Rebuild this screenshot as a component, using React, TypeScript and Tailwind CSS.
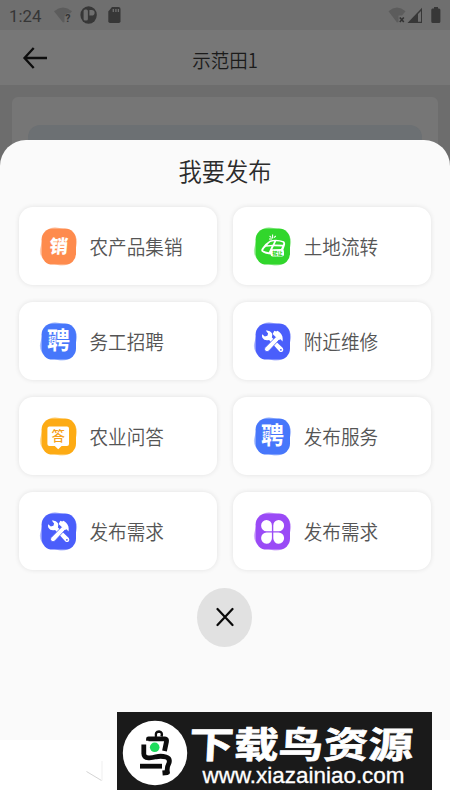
import { ReactNode } from "react";

type IconName = "sell" | "land" | "hire" | "repair" | "answer" | "more";

const actions: { label: string; icon: IconName }[] = [
  { label: "农产品集销", icon: "sell" },
  { label: "土地流转", icon: "land" },
  { label: "务工招聘", icon: "hire" },
  { label: "附近维修", icon: "repair" },
  { label: "农业问答", icon: "answer" },
  { label: "发布服务", icon: "hire" },
  { label: "发布需求", icon: "repair" },
  { label: "发布需求", icon: "more" },
];

const tileColors: Record<IconName, string> = {
  sell: "#fe8b4d",
  land: "#31d62c",
  hire: "#4777fb",
  repair: "#4a5efb",
  answer: "#fdab14",
  more: "#9a4af6",
};

const glyphs: Record<IconName, ReactNode> = {
  sell: (
    <text x="0" y="0" transform="translate(9.9 27) skewX(-5)" fontSize="18.5" fontWeight="900" fill="#fff">
      销
    </text>
  ),
  land: (
    <g>
      <path
        d="M17 14.5 Q24 12.6 31 15.3 Q33 17 31.5 20.5 L29 28 L19 28.5 Q12 28.5 8.6 25.6 Q7.6 24.2 9 22.3 Q12.5 17 17 14.5Z"
        fill="#fff"
      />
      <path
        d="M17.4 16 Q19.5 15.2 21.3 15.2 L19.6 18.7 L14.2 19.3 Q15.5 17.3 17.4 16Z M23.2 15.2 Q27 15.2 29.8 16.4 Q30.7 17.4 30 18.8 L21.6 18.6Z M13 20.8 L18.6 20.3 L15.8 26.2 Q12 25.7 10 24.6 Q10.8 22.6 13 20.8Z M20.8 20.3 L29.2 20.5 L28 23 L19.2 23.4Z"
        fill="#31d62c"
      />
      <path d="M19.6 8.6v4 M16.6 10l1.8 1.6 M22.8 10l-1.8 1.6 M16 13h3" stroke="#fff" strokeWidth="1.1" />
      <rect x="17.6" y="23.6" width="13.4" height="7" rx="2" fill="#fff" />
      <text x="19.4" y="29" fontSize="5" fontWeight="900" fill="#31d62c">
        转让
      </text>
    </g>
  ),
  hire: (
    <g>
      <text x="0" y="0" transform="translate(8 28.3) scale(1 1.04)" fontSize="23" fontWeight="700" fill="#fff">
        聘
      </text>
      <rect x="9.8" y="13.8" width="6.8" height="8" fill="#4777fb" />
      <text x="9.5" y="20.8" fontSize="7.4" fontWeight="700" fill="#fff">
        招
      </text>
    </g>
  ),
  repair: (
    <g>
      {/* wrench */}
      <path
        d="M9.2 13.2 L11.8 15.5 L14.4 14.8 L15.1 12.4 L12.8 9.6 Q16.9 9 18.8 12 Q19.8 14 18.9 16.4 L29.8 27.1 Q31.2 29.4 29.4 30.7 Q27.6 31.6 26.2 30.2 L16.1 19 Q11.4 20.2 9.4 16.7 Q8.6 15 9.2 13.2Z"
        fill="#fff"
      />
      {/* hammer */}
      <path
        d="M12.1 26.6 L23.2 15.4 L26.4 18.6 L15.8 30 Q14 31.4 12.2 30 Q10.7 28.2 12.1 26.6Z"
        fill="#fff"
        stroke="#4a5efb"
        strokeWidth="0.8"
      />
      <path
        d="M19.6 13 L21.4 9.8 L23.2 10.6 L24.4 9.8 Q27.8 11.2 29.4 15.6 Q30 18 29.5 20.6 L27.6 18.2 L25.9 19 L19.6 13Z"
        fill="#fff"
      />
      <circle cx="27.9" cy="28.8" r="0.9" fill="#4a5efb" />
    </g>
  ),
  answer: (
    <g>
      <path
        d="M10.4 10.6 h17.6 q2 0 2 2 v15.4 q0 2 -2 2 h-5.4 l-3.4 3.2 l-3.4 -3.2 h-5.4 q-2 0 -2 -2 v-15.4 q0 -2 2 -2Z"
        fill="#fff"
      />
      <text x="12.6" y="25" fontSize="13.4" fontWeight="500" fill="#f5a01a">
        答
      </text>
    </g>
  ),
  more: (
    <g fill="#fff">
      <path d="M18.9 20.2 h-5.2 a5.4 5.6 0 1 1 5.2 -5.6Z" />
      <path d="M20.3 20.2 v-5.6 a5.4 5.6 0 1 1 5.2 5.6Z" />
      <path d="M18.9 21.6 v5.6 a5.4 5.6 0 1 1 -5.2 -5.6Z" />
      <path d="M20.3 21.6 h5.2 a5.4 5.6 0 1 1 -5.2 5.6Z" />
    </g>
  ),
};

function ActionIcon({ name }: { name: IconName }) {
  const color = tileColors[name];
  return (
    <svg width="40" height="42" viewBox="0 0 40 42" className="mt-px shrink-0">
      <rect x="2.3" y="2.4" width="34.4" height="36" rx="12" fill={color} opacity="0.42" transform="rotate(15 19.5 20.4)" />
      <rect x="2.6" y="2.6" width="34.4" height="36" rx="11" fill={color} />
      {glyphs[name]}
    </svg>
  );
}

function StatusBar() {
  return (
    <div className="flex h-[30px] items-center bg-[#6f6f6f] px-[9px]">
      <span className="mt-[2px] w-[45px] font-[Roboto] text-[16.8px] leading-none text-[#363636]">1:24</span>
      <svg width="70" height="20" viewBox="0 0 70 20">
        <path d="M0 6.2 Q9 -1 18 6.2 L16 8.5 Q11 7.6 10.5 12 L10.5 17 L9 17.5Z" fill="#5c5c5c" />
        <text x="11.2" y="17" fontSize="10.5" fontWeight="700" fill="#333" fontFamily="Roboto">
          ?
        </text>
        <ellipse cx="34.6" cy="10" rx="8.2" ry="8.8" fill="#373737" />
        <rect x="29.6" y="4.5" width="4.3" height="11" rx="1.5" fill="#6f6f6f" />
        <path d="M35.4 5 h2.4 a2.7 2.7 0 0 1 0 5.6 h-2.4Z" fill="#6f6f6f" />
        <path d="M58 2 h6.5 q2 0 2 2 v12.2 q0 1.8 -1.8 1.8 h-8.6 q-1.8 0 -1.8 -1.8 v-9.8Z" fill="#373737" />
        <path d="M59.3 4v3 M61.9 4v3 M64.4 4v3" stroke="#6f6f6f" strokeWidth="1.3" />
      </svg>
      <svg width="53" height="20" viewBox="0 0 53 20" className="ml-auto">
        <path d="M0.5 6.2 Q9 -1 17.5 6.2 L14 10.5 H10.5 V17 L9 17.5Z" fill="#5c5c5c" />
        <path d="M11.8 12.5l4 4.5M15.8 12.5l-4 4.5" stroke="#333" strokeWidth="1.6" />
        <path d="M19.5 18 L34 2.8 V18Z" fill="#373737" />
        <path d="M30 9 L33 6 V16.8 H30Z" fill="#6f6f6f" />
        <path d="M44.5 3.5 h1.5 v-1.5 h4 v1.5 h0.9 q1.5 0 1.5 1.5 v11.5 q0 1.5 -1.5 1.5 h-6.1 q-1.5 0 -1.5 -1.5 v-11.5 q0 -1.5 1.2 -1.5Z" fill="#373737" />
      </svg>
    </div>
  );
}

function Watermark() {
  return (
    <div className="absolute top-[712px] left-[117px] flex h-[78px] w-[315px] items-center bg-[#1a1a1a] pl-[5px]">
      <svg width="66" height="66" viewBox="0 0 66 66" className="mt-[3px] shrink-0">
        <circle cx="33" cy="33" r="32.2" fill="#fff" />
        <g fill="none" stroke="#0c0c0c" strokeWidth="4.8" strokeLinejoin="round">
          <path d="M34 17 Q33 11.5 37 11.5 Q41 12 39.5 16.5" strokeWidth="2.4" />
          <path d="M26.5 20.8 V18.8 H42.8 Q45 19 44.5 21.5 L42.5 31" />
          <path d="M21.8 24.5 V33 Q21.5 37.5 26.5 37.8 Q30 38 34 36.8 Q39 35.6 44 37 Q48.4 38.4 47 43 Q44.4 48 45.5 52.5 L40.5 53" />
          <path d="M18 46.2 H40" />
        </g>
        <circle cx="32.7" cy="27.3" r="4.8" fill="#1edb5b" />
      </svg>
      <svg width="244" height="78" viewBox="0 0 244 78" className="block overflow-visible">
        <text
          transform="translate(0.5 46) skewX(-3)"
          fontSize="36.5"
          fontWeight="700"
          fill="#fff"
          stroke="#fff"
          strokeWidth="0.7"
          textLength="224"
          lengthAdjust="spacingAndGlyphs"
        >
          下载鸟资源
        </text>
        <text
          transform="translate(14.5 71) scale(1 1.06)"
          fontSize="20.5"
          fill="#fff"
          stroke="#fff"
          strokeWidth="0.3"
          textLength="202"
          lengthAdjust="spacingAndGlyphs"
          fontFamily="Liberation Sans"
        >
          www.xiazainiao.com
        </text>
      </svg>
    </div>
  );
}

export default function App() {
  return (
    <div className="relative h-[800px] w-[450px] overflow-hidden bg-white font-['Noto_Sans_CJK_SC',sans-serif]">
      {/* dimmed page behind the sheet */}
      <div className="h-[168px] bg-[#6d6d6d]">
        <StatusBar />
        <header className="grid h-[55px] grid-cols-[1fr_auto_1fr] items-center bg-[#777777]">
          <svg width="26" height="24" viewBox="0 0 26 24" className="ml-[21px]" fill="none" stroke="#0d0d0d" strokeWidth="2.3">
            <path d="M12.7 2 L3.5 12 L12.7 22 M3.5 12 H26" />
          </svg>
          <h1 className="mt-[5px] scale-y-[1.06] text-[18.5px] leading-none font-[350] text-[#1b1b1b]">示范田1</h1>
        </header>
        <div className="mx-3 mt-3 h-[71px] rounded-t-md bg-[#767676] px-4 pt-7">
          <div className="h-[43px] rounded-t-xl bg-[#6c7073]" />
        </div>
      </div>

      <section className="relative -mt-7 flex h-[600px] flex-col items-center rounded-t-[26px] bg-[#fafafa]">
        <h2 className="mt-[18px] h-[24px] scale-y-[1.07] text-[23.3px] leading-6 font-[350] text-[#2b2b2b]">我要发布</h2>
        <div className="mt-[25.4px] grid w-full grid-cols-2 gap-x-4 gap-y-[17px] pr-[19px] pl-[18.5px]">
          {actions.map((action, i) => (
            <button
              key={i}
              className="flex h-[78px] items-center rounded-[14px] bg-white pl-[20.5px] shadow-[0_0_5px_rgba(0,0,0,0.1)]"
            >
              <ActionIcon name={action.icon} />
              <span className="ml-[10.5px] scale-y-[1.07] text-[18.6px] leading-none font-[350] text-[#555555]">
                {action.label}
              </span>
            </button>
          ))}
        </div>
        <button className="mt-[17.6px] mr-px flex h-[59px] w-[55px] items-center justify-center rounded-[50%] bg-[#e1e1e1]">
          <svg width="18" height="20" viewBox="0 0 18 20" fill="none" stroke="#0a0a0a" strokeWidth="2.2" strokeLinecap="round">
            <path d="M1.5 2 L16.5 18 M16.5 2 L1.5 18" />
          </svg>
        </button>
      </section>

      {/* faint back key of the navigation bar */}
      <svg width="20" height="24" viewBox="0 0 20 24" className="mt-[19px] ml-[85px]" fill="none" stroke="#d4d4d4">
        <path d="M1.5 12.5 L16.5 21.5" />
        <path d="M17 2 V21.5" stroke="#efefef" />
      </svg>

      <Watermark />
    </div>
  );
}
